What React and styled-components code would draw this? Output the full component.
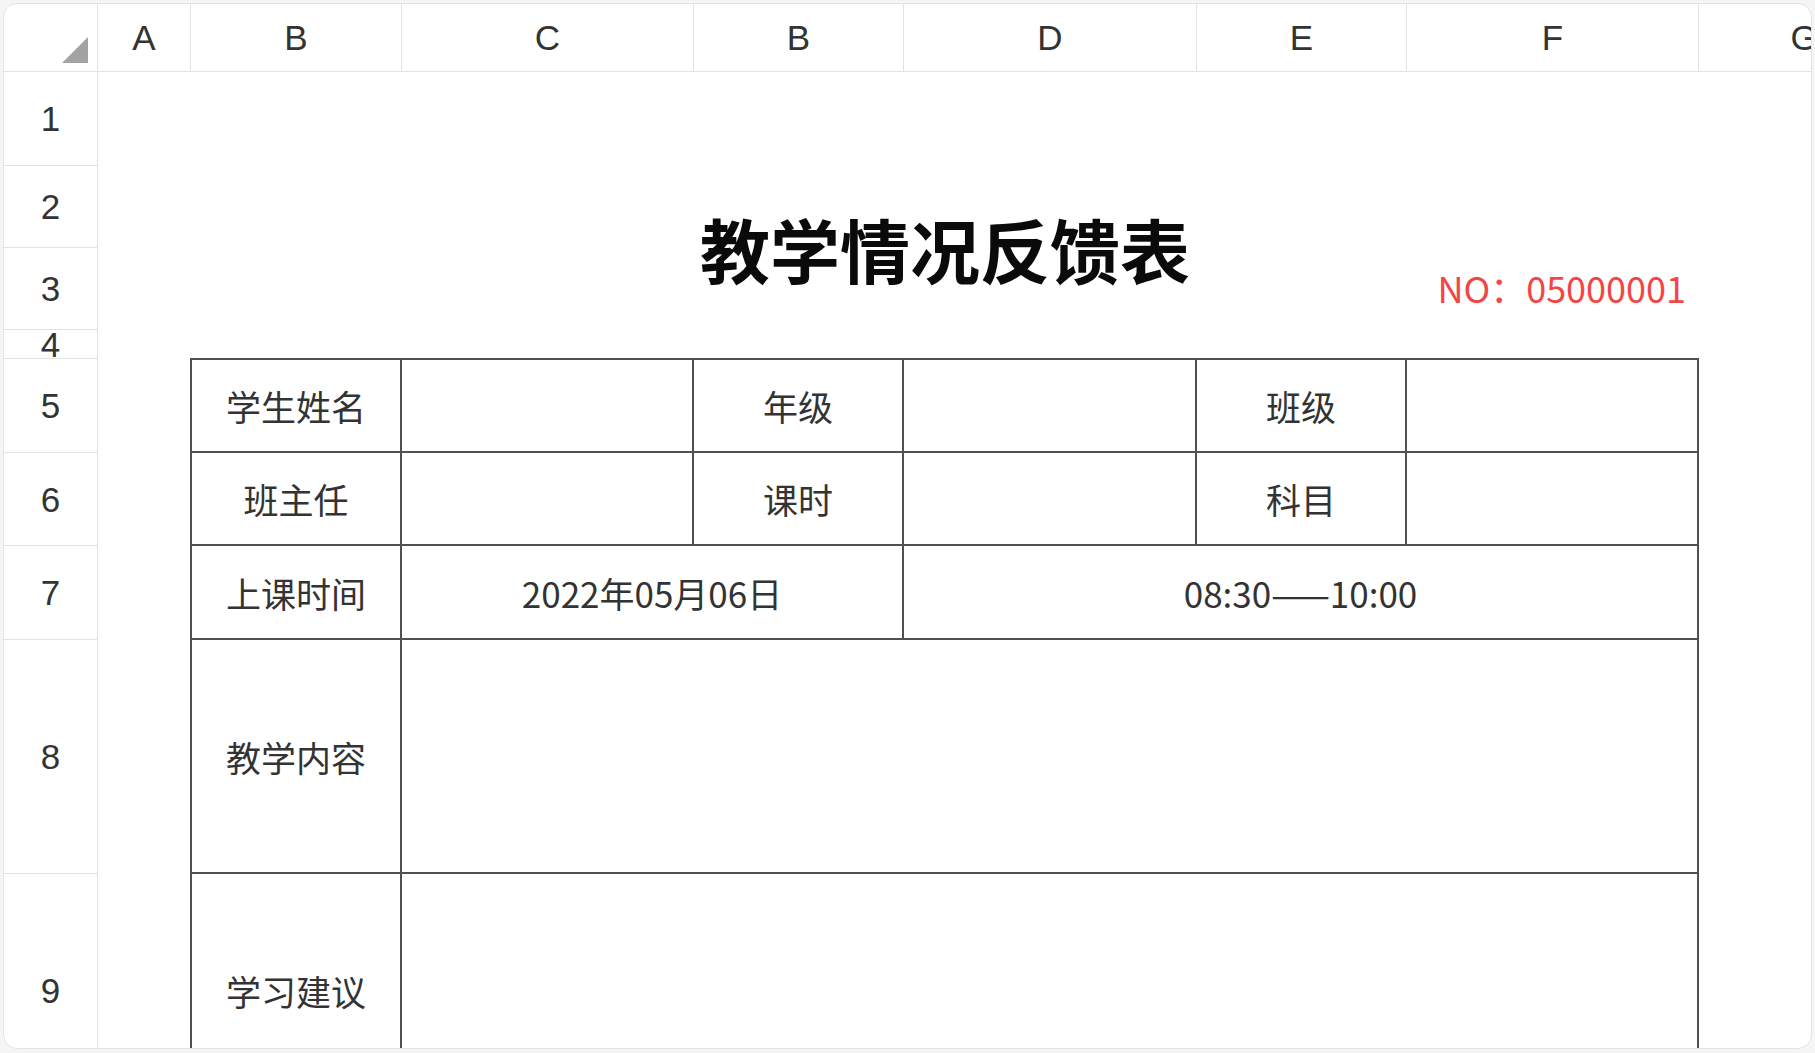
import React from 'react';
import styled, { createGlobalStyle } from 'styled-components';

const Global = createGlobalStyle`
  html, body {
    margin: 0;
    padding: 0;
    background: #f5f5f5;
  }
  body {
    padding: 3px 3px 0 3px;
  }
  #root {
    width: 100%;
  }
`;

const Sheet = styled.div`
  box-sizing: border-box;
  height: 1046px;
  background: #ffffff;
  border: 1px solid #e3e3e3;
  border-radius: 14px;
  overflow: hidden;
  display: grid;
  grid-template-columns: 94px 93px 211px 292px 210px 293px 210px 292px 211px;
  grid-template-rows: 68px 94px 82px 82px 29px 94px 93px 94px 234px 234px;
`;

const HeadCell = styled.div`
  box-sizing: border-box;
  grid-row: 1;
  grid-column: ${(p) => p.$col};
  border-right: 1px solid #e2e2e2;
  border-bottom: 1px solid #e2e2e2;
  display: flex;
  align-items: center;
  justify-content: center;
  font-family: "Liberation Sans", Arial, sans-serif;
  font-size: 35px;
  color: #333333;
  white-space: nowrap;
`;

const Corner = styled(HeadCell)`
  align-items: flex-end;
  justify-content: flex-end;
  padding: 0 9px 8px 0;
`;

const RowHead = styled.div`
  box-sizing: border-box;
  grid-column: 1;
  grid-row: ${(p) => p.$row};
  border-right: 1px solid #e2e2e2;
  border-bottom: 1px solid #e2e2e2;
  display: flex;
  align-items: center;
  justify-content: center;
  font-family: "Liberation Sans", Arial, sans-serif;
  font-size: 35px;
  color: #333333;
  line-height: 1;
  overflow: visible;
`;

const Title = styled.h1`
  grid-column: 3 / 9;
  grid-row: 3 / 5;
  margin: 0;
  display: flex;
  align-items: center;
  justify-content: center;
  font-family: "Noto Sans CJK SC", "Noto Sans", sans-serif;
  font-weight: 700;
  font-size: 70px;
  line-height: 1;
  color: #0a0a0a;
  padding-top: 2px;
`;

const SerialNo = styled.div`
  grid-column: 8 / 9;
  grid-row: 4 / 5;
  display: flex;
  align-items: center;
  justify-content: flex-end;
  padding: 0 13px 4px 0;
  font-family: "Noto Sans CJK SC", "Noto Sans", sans-serif;
  font-size: 36px;
  color: #f24646;
  white-space: nowrap;
`;

const FormTable = styled.div`
  grid-column: 3 / 9;
  grid-row: 6 / 11;
  margin: -1px 0 0 -1px;
  box-sizing: border-box;
  border-left: 2px solid #505050;
  border-top: 2px solid #505050;
  display: grid;
  grid-template-columns: 210px 292px 210px 293px 210px 292px;
  grid-template-rows: 93px 93px 94px 234px 234px;
`;

const Cell = styled.div`
  box-sizing: border-box;
  grid-column: ${(p) => (p.$span ? `span ${p.$span}` : 'auto')};
  border-right: 2px solid #505050;
  border-bottom: 2px solid #505050;
  display: flex;
  align-items: center;
  justify-content: center;
  font-family: "Noto Sans CJK SC", "Noto Sans", sans-serif;
  font-size: 35px;
  color: #333333;
  white-space: nowrap;
`;

const CornerMark = () => (
  <svg width="26" height="26" viewBox="0 0 26 26">
    <polygon points="26,0 26,26 0,26" fill="#a3a3a3" />
  </svg>
);

const colLetters = ['A', 'B', 'C', 'B', 'D', 'E', 'F', 'G'];
const rowNums = [1, 2, 3, 4, 5, 6, 7, 8, 9];

export default function App() {
  return (
    <>
      <Global />
      <Sheet>
        <Corner $col={1}>
          <CornerMark />
        </Corner>
        {colLetters.map((l, i) => (
          <HeadCell key={i} $col={i + 2}>
            {l}
          </HeadCell>
        ))}
        {rowNums.map((n) => (
          <RowHead key={n} $row={n + 1}>
            {n}
          </RowHead>
        ))}

        <Title>教学情况反馈表</Title>
        <SerialNo>NO：05000001</SerialNo>

        <FormTable>
          <Cell>学生姓名</Cell>
          <Cell />
          <Cell>年级</Cell>
          <Cell />
          <Cell>班级</Cell>
          <Cell />

          <Cell>班主任</Cell>
          <Cell />
          <Cell>课时</Cell>
          <Cell />
          <Cell>科目</Cell>
          <Cell />

          <Cell>上课时间</Cell>
          <Cell $span={2}>2022年05月06日</Cell>
          <Cell $span={3}>08:30——10:00</Cell>

          <Cell>教学内容</Cell>
          <Cell $span={5} />

          <Cell>学习建议</Cell>
          <Cell $span={5} />
        </FormTable>
      </Sheet>
    </>
  );
}
